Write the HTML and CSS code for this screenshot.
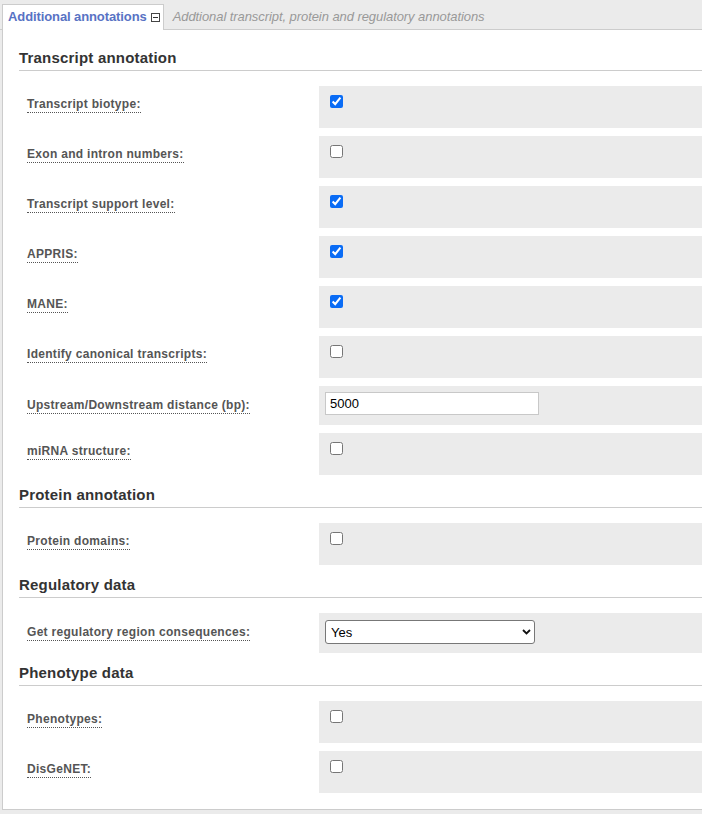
FILE: index.html
```html
<!DOCTYPE html>
<html>
<head>
<meta charset="utf-8">
<title>Additional annotations</title>
<link rel="stylesheet" href="styles.css">
</head>
<body>
<div class="tabbar">
  <div class="tab">
    <span class="tab-title">Additional annotations</span>
    <svg class="tab-icon" width="9" height="9" viewBox="0 0 9 9"><rect x="0.5" y="0.5" width="8" height="8" fill="#fff" stroke="#444"/><line x1="2" y1="4.5" x2="7" y2="4.5" stroke="#333"/></svg>
  </div>
  <div class="tab-desc">Addtional transcript, protein and regulatory annotations</div>
</div>
<div class="panel">
  <h3 class="section-title first">Transcript annotation</h3>
  <div class="row"><div class="label"><span>Transcript biotype:</span></div><div class="value"><input type="checkbox" checked></div></div>
  <div class="row"><div class="label"><span>Exon and intron numbers:</span></div><div class="value"><input type="checkbox"></div></div>
  <div class="row"><div class="label"><span>Transcript support level:</span></div><div class="value"><input type="checkbox" checked></div></div>
  <div class="row"><div class="label"><span>APPRIS:</span></div><div class="value"><input type="checkbox" checked></div></div>
  <div class="row"><div class="label"><span>MANE:</span></div><div class="value"><input type="checkbox" checked></div></div>
  <div class="row"><div class="label"><span>Identify canonical transcripts:</span></div><div class="value"><input type="checkbox"></div></div>
  <div class="row row-input"><div class="label"><span>Upstream/Downstream distance (bp):</span></div><div class="value"><input class="text" type="text" value="5000"></div></div>
  <div class="row last"><div class="label"><span>miRNA structure:</span></div><div class="value"><input type="checkbox"></div></div>

  <h3 class="section-title">Protein annotation</h3>
  <div class="row last"><div class="label"><span>Protein domains:</span></div><div class="value"><input type="checkbox"></div></div>

  <h3 class="section-title">Regulatory data</h3>
  <div class="row row-select last"><div class="label"><span>Get regulatory region consequences:</span></div><div class="value"><div class="select-wrap"><select><option>Yes</option><option>No</option></select><svg class="chevron" width="9" height="6" viewBox="0 0 9 6"><polyline points="1,1 4.5,4.5 8,1" fill="none" stroke="#111" stroke-width="1.8"/></svg></div></div></div>

  <h3 class="section-title">Phenotype data</h3>
  <div class="row"><div class="label"><span>Phenotypes:</span></div><div class="value"><input type="checkbox"></div></div>
  <div class="row last"><div class="label"><span>DisGeNET:</span></div><div class="value"><input type="checkbox"></div></div>
</div>
</body>
</html>
```

FILE: styles.css
```css
html, body {
  margin: 0;
  padding: 0;
}
body {
  background: #ebebeb;
  font-family: "Liberation Sans", Arial, Helvetica, sans-serif;
  overflow: hidden;
}
.tabbar {
  display: flex;
  align-items: flex-start;
  padding: 4px 0 0 2px;
  border-bottom: 1px solid #cccccc;
}
.tab {
  box-sizing: border-box;
  display: flex;
  align-items: flex-start;
  height: 26px;
  margin-bottom: -1px;
  padding: 4px 3px 0 5px;
  background: #fff;
  border: 1px solid #cccccc;
  border-bottom: none;
}
.tab-title {
  font-size: 13px;
  line-height: 16px;
  font-weight: bold;
  letter-spacing: -0.1px;
  color: #5872c4;
}
.tab-icon {
  display: block;
  margin: 4px 0 0 4px;
}
.tab-desc {
  margin-left: 9px;
  padding-top: 5px;
  font-size: 13px;
  line-height: 16px;
  font-style: italic;
  letter-spacing: -0.07px;
  color: #999;
}
.panel {
  margin-left: 2px;
  background: #fff;
  border-left: 1px solid #cccccc;
  border-bottom: 1px solid #cccccc;
  padding: 19px 0 16px 16px;
}
.section-title {
  margin: 11px 0 15px 0;
  padding-bottom: 3px;
  border-bottom: 1px solid #cccccc;
  font-size: 15px;
  line-height: 18px;
  font-weight: bold;
  letter-spacing: 0.2px;
  color: #333;
}
.section-title.first {
  margin-top: 0;
}
.row {
  display: grid;
  grid-template-columns: 300px 1fr;
  margin-bottom: 8px;
}
.row.last {
  margin-bottom: 0;
}
.label {
  padding: 8px 0 0 8px;
}
.label span {
  display: inline-block;
  font-size: 12px;
  line-height: 15px;
  font-weight: bold;
  letter-spacing: 0.3px;
  color: #555;
  border-bottom: 1px dotted #555;
}
.value {
  box-sizing: border-box;
  height: 42px;
  padding: 9px 0 0 11px;
  background: #ebebeb;
}
.value input[type="checkbox"] {
  display: block;
  margin: 0;
  width: 13px;
  height: 13px;
  accent-color: #0a6cf5;
}
.row-input .label,
.row-select .label {
  padding-top: 9px;
}
.row-input .value {
  height: 39px;
  padding: 6px 0 0 6px;
}
.row-select .value {
  height: 40px;
  padding: 7px 0 0 6px;
}
.text {
  display: block;
  box-sizing: border-box;
  width: 214px;
  height: 23px;
  margin: 0;
  padding: 0 4px;
  border: 1px solid #c8c8c8;
  border-radius: 0;
  background: #fff;
  font-family: "Liberation Sans", Arial, sans-serif;
  font-size: 13px;
  color: #000;
  outline: none;
}
.select-wrap {
  position: relative;
  width: 210px;
}
.select-wrap select {
  display: block;
  box-sizing: border-box;
  width: 210px;
  height: 24px;
  margin: 0;
  padding: 0 5px;
  appearance: none;
  -webkit-appearance: none;
  border: 1px solid #777;
  border-radius: 3px;
  background: #fff;
  font-family: "Liberation Sans", Arial, sans-serif;
  font-size: 13px;
  color: #000;
}
.chevron {
  position: absolute;
  right: 4px;
  top: 9px;
  pointer-events: none;
}
```
